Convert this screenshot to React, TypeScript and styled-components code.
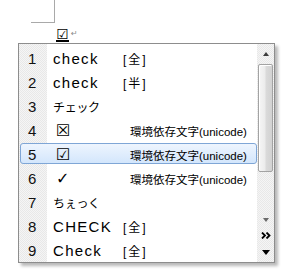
import React from "react";
import styled, { createGlobalStyle, css } from "styled-components";

const GlobalStyle = createGlobalStyle`
  html, body { margin: 0; padding: 0; background: #fff; }
  body {
    width: 290px;
    height: 279px;
    overflow: hidden;
    font-family: "Liberation Sans", "Noto Sans CJK JP", sans-serif;
  }
`;

const checker = css`
  background-color: #f5f5f5;
  background-image: conic-gradient(#e8e8e8 25%, transparent 0 50%, #e8e8e8 0 75%, transparent 0);
  background-size: 2px 2px;
`;

const Page = styled.div`
  display: flex;
  flex-direction: column;
`;

const Corner = styled.div`
  box-sizing: border-box;
  width: 24px;
  height: 23px;
  margin-left: 31px;
  border-right: 1px solid #a9a9a9;
  border-bottom: 1px solid #a9a9a9;
`;

const Composition = styled.div`
  display: flex;
  align-items: flex-end;
  height: 20px;
  padding: 0 0 0 56px;
  box-sizing: border-box;
`;

const Typed = styled.span`
  display: flex;
  justify-content: center;
  align-items: flex-end;
  font-family: "DejaVu Sans", sans-serif;
  font-size: 14px;
  line-height: 12px;
  height: 10px;
  width: 13px;
  overflow: visible;
  border-bottom: 2px solid #000;
  margin-bottom: 1px;
  color: #000;
  font-weight: bold;
`;

const Return = styled.span`
  font-family: "DejaVu Sans", sans-serif;
  font-size: 8px;
  line-height: 8px;
  color: #8a8a8a;
  margin: 0 0 5px 2px;
`;

const Popup = styled.div`
  display: flex;
  width: 257px;
  height: 220px;
  box-sizing: border-box;
  margin-left: 18px;
  border: 1px solid #8d8d8d;
  background: #fff;
  box-shadow: 3px 3px 3px rgba(0, 0, 0, 0.28);
`;

const List = styled.div`
  flex: 1;
  padding-top: 2px;
  background-color: #f5f5f5;
  background-image: linear-gradient(to right, transparent 28px, #fff 28px),
    conic-gradient(#e8e8e8 25%, transparent 0 50%, #e8e8e8 0 75%, transparent 0);
  background-size: 100% 100%, 2px 2px;
`;

const Row = styled.div`
  height: 24px;
  box-sizing: border-box;
  padding: 1px 0 2px 1px;
`;

const RowInner = styled.div<{ $selected?: boolean }>`
  display: flex;
  align-items: baseline;
  height: 21px;
  box-sizing: border-box;
  padding-top: 1px;
  border: 1px solid transparent;
  border-radius: 3px;
  ${(p) =>
    p.$selected &&
    css`
      border-color: #7fa6d6;
      background: linear-gradient(to bottom, #eef5fe, #d3e6fc);
    `}
`;

const Num = styled.span`
  width: 32px;
  box-sizing: border-box;
  padding-left: 7px;
  font-size: 15px;
  line-height: 19px;
  color: #111;
`;

const Candidate = styled.span<{ $kind?: "latin" | "kana" | "symbol" }>`
  width: 70px;
  color: #000;
  white-space: nowrap;
  ${(p) =>
    p.$kind === "kana"
      ? css`
          font-family: "Noto Sans CJK JP", sans-serif;
          font-size: 12px;
          letter-spacing: -0.3px;
        `
      : p.$kind === "symbol"
      ? css`
          font-family: "DejaVu Sans", sans-serif;
          font-size: 16px;
          padding-left: 3px;
          width: 67px;
        `
      : css`
          font-size: 15px;
          letter-spacing: 1.3px;
        `}
`;

const Note = styled.span<{ $long?: boolean }>`
  color: #000;
  white-space: nowrap;
  ${(p) =>
    p.$long
      ? css`
          font-size: 11.5px;
          margin-left: 7px;
        `
      : css`
          font-size: 12px;
          letter-spacing: 2px;
        `}
`;

const ScrollColumn = styled.div`
  width: 17px;
  display: flex;
  flex-direction: column;
  ${checker}
`;

const Track = styled.div`
  height: 183px;
  display: flex;
  flex-direction: column;
`;

const ArrowButton = styled.div<{ $h: number }>`
  height: ${(p) => p.$h}px;
  display: flex;
  align-items: center;
  justify-content: center;
`;

const Triangle = styled.span<{ $dir: "up" | "down"; $bold?: boolean }>`
  width: 0;
  height: 0;
  border-left: ${(p) => (p.$bold ? 4 : 3.5)}px solid transparent;
  border-right: ${(p) => (p.$bold ? 4 : 3.5)}px solid transparent;
  ${(p) =>
    p.$dir === "up"
      ? css`border-bottom: 4px solid #3c3c3c;`
      : css`border-top: ${p.$bold ? 5 : 4}px solid ${p.$bold ? "#000" : "#6a6a6a"};`}
`;

const Thumb = styled.div`
  height: 108px;
  margin: 1px 1px 0 1px;
  box-sizing: border-box;
  border: 1px solid #a3a3a3;
  border-radius: 2px;
  background: linear-gradient(to right, #f6f6f6 0%, #ececec 45%, #dadada 55%, #d2d2d2 100%);
  box-shadow: inset 1px 1px 0 #fff;
`;

const Spacer = styled.div`
  flex: 1;
`;

const ExpandButton = styled.div`
  height: 17px;
  display: flex;
  align-items: center;
  justify-content: center;
`;

const candidates: {
  n: number;
  text: string;
  kind?: "latin" | "kana" | "symbol";
  note?: string;
  selected?: boolean;
}[] = [
  { n: 1, text: "check", note: "[全]" },
  { n: 2, text: "check", note: "[半]" },
  { n: 3, text: "チェック", kind: "kana" },
  { n: 4, text: "☒", kind: "symbol", note: "環境依存文字(unicode)" },
  { n: 5, text: "☑", kind: "symbol", note: "環境依存文字(unicode)", selected: true },
  { n: 6, text: "✓", kind: "symbol", note: "環境依存文字(unicode)" },
  { n: 7, text: "ちぇっく", kind: "kana" },
  { n: 8, text: "CHECK", note: "[全]" },
  { n: 9, text: "Check", note: "[全]" },
];

export default function App() {
  return (
    <Page>
      <GlobalStyle />
      <Corner />
      <Composition>
        <Typed>☑</Typed>
        <Return>↵</Return>
      </Composition>
      <Popup>
        <List>
          {candidates.map((c) => (
            <Row key={c.n}>
              <RowInner $selected={c.selected}>
                <Num>{c.n}</Num>
                <Candidate $kind={c.kind}>{c.text}</Candidate>
                {c.note && <Note $long={c.note.length > 3}>{c.note}</Note>}
              </RowInner>
            </Row>
          ))}
        </List>
        <ScrollColumn>
          <Track>
            <ArrowButton $h={19}>
              <Triangle $dir="up" />
            </ArrowButton>
            <Thumb />
            <Spacer />
            <ArrowButton $h={14}>
              <Triangle $dir="down" />
            </ArrowButton>
          </Track>
          <ExpandButton>
            <svg width="10" height="7" viewBox="0 0 10 7">
              <path d="M1 0.5 L4 3.5 L1 6.5 M5.5 0.5 L8.5 3.5 L5.5 6.5" fill="none" stroke="#000" strokeWidth="1.8" />
            </svg>
          </ExpandButton>
          <ArrowButton $h={16}>
            <Triangle $dir="down" $bold />
          </ArrowButton>
        </ScrollColumn>
      </Popup>
    </Page>
  );
}
